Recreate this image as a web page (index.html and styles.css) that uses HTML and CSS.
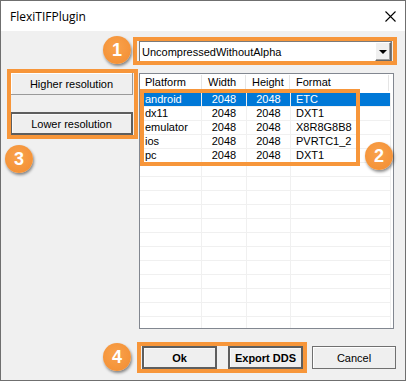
FILE: index.html
```html
<!DOCTYPE html>
<html lang="en">
<head>
    <meta charset="UTF-8">
    <title>FlexiTIFPlugin</title>
    <link rel="stylesheet" href="styles.css">
</head>
<body>
    <div class="stage">
        <div class="window">
            <div class="titlebar">
                <span class="title">FlexiTIFPlugin</span>
                <svg class="close" width="11" height="11" viewBox="0 0 11 11">
                    <path d="M0.5 0.5L10.5 10.5M10.5 0.5L0.5 10.5" stroke="#000" stroke-width="1.1" fill="none"/>
                </svg>
            </div>
            <div class="client">
                <div class="combo">
                    <span class="combo-text">UncompressedWithoutAlpha</span>
                    <span class="combo-btn"><span class="arrow"></span></span>
                </div>

                <div class="side">
                    <button class="btn">Higher resolution</button>
                    <button class="btn default">Lower resolution</button>
                </div>

                <div class="list">
                    <div class="list-head">
                        <span>Platform</span>
                        <span>Width</span>
                        <span>Height</span>
                        <span>Format</span>
                    </div>
                    <div class="row sel"><span>android</span><span class="num">2048</span><span class="num">2048</span><span>ETC</span></div>
                    <div class="row"><span>dx11</span><span class="num">2048</span><span class="num">2048</span><span>DXT1</span></div>
                    <div class="row"><span>emulator</span><span class="num">2048</span><span class="num">2048</span><span>X8R8G8B8</span></div>
                    <div class="row"><span>ios</span><span class="num">2048</span><span class="num">2048</span><span>PVRTC1_2</span></div>
                    <div class="row"><span>pc</span><span class="num">2048</span><span class="num">2048</span><span>DXT1</span></div>
                    <div class="row"><span></span><span></span><span></span><span></span></div>
                    <div class="row"><span></span><span></span><span></span><span></span></div>
                    <div class="row"><span></span><span></span><span></span><span></span></div>
                    <div class="row"><span></span><span></span><span></span><span></span></div>
                    <div class="row"><span></span><span></span><span></span><span></span></div>
                    <div class="row"><span></span><span></span><span></span><span></span></div>
                    <div class="row"><span></span><span></span><span></span><span></span></div>
                    <div class="row"><span></span><span></span><span></span><span></span></div>
                    <div class="row"><span></span><span></span><span></span><span></span></div>
                    <div class="row"><span></span><span></span><span></span><span></span></div>
                    <div class="row"><span></span><span></span><span></span><span></span></div>
                    <div class="row"><span></span><span></span><span></span><span></span></div>
                </div>

                <div class="actions">
                    <button class="btn bold default ok">Ok</button>
                    <button class="btn bold default export">Export DDS</button>
                    <button class="btn cancel">Cancel</button>
                </div>
            </div>
        </div>

        <!-- annotation frames and numbers over the dialog -->
        <div class="mark mark-1"></div>
        <div class="mark mark-2"></div>
        <div class="mark mark-3"></div>
        <div class="mark mark-4"></div>
        <div class="badge badge-1">1</div>
        <div class="badge badge-2">2</div>
        <div class="badge badge-3">3</div>
        <div class="badge badge-4">4</div>
    </div>
</body>
</html>
```

FILE: styles.css
```css
body {
    margin: 0;
    font-family: "Liberation Sans", Arial, sans-serif;
    font-size: 11px;
    color: #000;
}
.stage {
    position: relative;
    width: 406px;
    height: 381px;
}
.window {
    width: 406px;
    height: 381px;
    box-sizing: border-box;
    border: 1px solid #6f6f6f;
    background-color: #f0f0f0;
    display: flex;
    flex-direction: column;
}
.titlebar {
    height: 30px;
    flex: none;
    background-color: #fff;
    display: flex;
    align-items: center;
    justify-content: space-between;
    padding: 0 9px 0 9px;
}
.title {
    font-family: "Open Sans", sans-serif;
    font-size: 12px;
}
.client {
    flex: 1;
    display: grid;
    grid-template-columns: 123px 255px;
    column-gap: 6px;
    align-content: start;
    align-items: start;
    padding: 10px 0 0 9px;
}

/* combo box */
.combo {
    grid-column: 2;
    width: 253px;
    height: 21px;
    box-sizing: border-box;
    border: 1px solid #7a7a7a;
    background-color: #fff;
    display: flex;
    align-items: center;
    padding-left: 2px;
}
.combo-btn {
    margin-left: auto;
    width: 16px;
    height: 19px;
    box-sizing: border-box;
    background-color: #f0f0f0;
    border-top: 1px solid #fff;
    border-left: 1px solid #fff;
    border-right: 1px solid #696969;
    border-bottom: 1px solid #696969;
    box-shadow: inset -1px -1px #a0a0a0;
    display: flex;
    align-items: center;
    justify-content: center;
}
.arrow {
    width: 0;
    height: 0;
    border-left: 4px solid transparent;
    border-right: 4px solid transparent;
    border-top: 4px solid #000;
    margin: 1px 1px 0 0;
}

/* buttons */
.btn {
    font-family: "Liberation Sans", Arial, sans-serif;
    font-size: 11px;
    color: #000;
    height: 23px;
    padding: 0;
    box-sizing: border-box;
    background-color: #efefef;
    border: 1px solid #9a9a9a;
    box-shadow: inset 1px 1px #fff;
}
.btn.default {
    border: 2px solid #5e5e5e;
    box-shadow: inset 1px 1px #fafafa;
}
.btn.bold {
    font-weight: bold;
}
.side {
    grid-column: 1;
    margin-top: 10px;
    display: flex;
    flex-direction: column;
    gap: 17px;
}
.side .btn {
    width: 123px;
}
.actions {
    grid-column: 1 / -1;
    margin-top: 17px;
    margin-right: -2px;
    display: flex;
    justify-content: flex-end;
}
.ok {
    width: 75px;
}
.export {
    width: 75px;
    margin-left: 11px;
    border-width: 1px;
    border-color: #555;
}
.cancel {
    width: 84px;
    margin-left: 9px;
    border-color: #707070;
}

/* list view */
.list {
    grid-column: 2;
    margin-top: 11px;
    height: 256px;
    box-sizing: border-box;
    border: 1px solid #828790;
    background-color: #fff;
    overflow: hidden;
}
.list-head {
    display: grid;
    grid-template-columns: 62px 44px 44px 99px;
    height: 19px;
    align-items: start;
}
.list-head span {
    height: 16px;
    margin-top: 1px;
    box-sizing: border-box;
    border-right: 1px solid #e5e5e5;
    line-height: 15px;
    padding-left: 5px;
}
.list-head span + span {
    padding-left: 6px;
}
.row {
    display: grid;
    grid-template-columns: 62px 45px 44px 100px;
    height: 14px;
}
.row span {
    box-sizing: border-box;
    border-right: 1px solid #f0f0f0;
    border-bottom: 1px solid #f0f0f0;
    line-height: 13px;
    padding-left: 5px;
    white-space: nowrap;
}
.row span.num {
    text-align: center;
    padding-left: 0;
}
.row.sel span {
    background-color: #0078d7;
    color: #fff;
}

/* annotations */
.mark {
    position: absolute;
    box-sizing: border-box;
    border: 4px solid #f7963a;
}
.mark-1 {
    left: 133px;
    top: 37px;
    width: 264px;
    height: 28px;
}
.mark-2 {
    left: 140px;
    top: 89px;
    width: 220px;
    height: 77px;
}
.mark-3 {
    left: 7px;
    top: 69px;
    width: 131px;
    height: 70px;
}
.mark-4 {
    left: 137px;
    top: 342px;
    width: 170px;
    height: 31px;
}
.badge {
    position: absolute;
    width: 28px;
    height: 28px;
    border-radius: 50%;
    background: radial-gradient(circle at 45% 40%, #f9a24c, #f28c30);
    color: #fff;
    font-family: "Liberation Sans", Arial, sans-serif;
    font-weight: bold;
    font-size: 18px;
    display: flex;
    align-items: center;
    justify-content: center;
    box-shadow: 1px 2px 3px rgba(0, 0, 0, 0.45);
}
.badge-1 {
    left: 103px;
    top: 36px;
}
.badge-2 {
    left: 365px;
    top: 142px;
}
.badge-3 {
    left: 5px;
    top: 145px;
}
.badge-4 {
    left: 103px;
    top: 343px;
}
```
